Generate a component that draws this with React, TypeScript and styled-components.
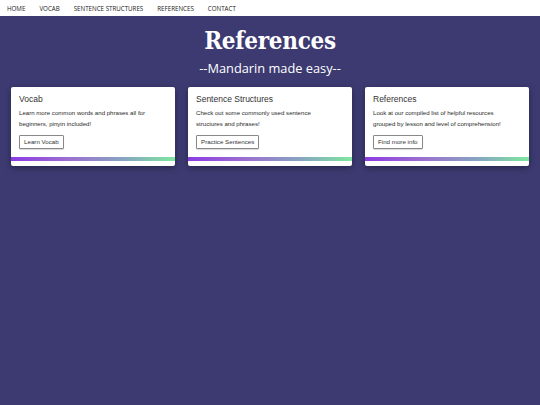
import React from 'react';
import styled, { createGlobalStyle } from 'styled-components';

const GlobalStyle = createGlobalStyle`
    html, body {
        margin: 0;
        padding: 0;
        background: #3c3a71;
        min-height: 100%;
    }
    body {
        font-family: 'Liberation Sans', Arial, sans-serif;
    }
`;

const Page = styled.div`
    min-height: 405px;
    background: #3c3a71;
`;

const Nav = styled.nav`
    height: 16px;
    background: #ffffff;
    display: flex;
    align-items: center;
    padding-left: 7px;
    gap: 14px;
`;

const NavLink = styled.a`
    font-family: 'Open Sans', sans-serif;
    font-size: 6.2px;
    color: #222;
    text-decoration: none;
`;

const Header = styled.header`
    display: flex;
    flex-direction: column;
    align-items: center;
    padding-top: 7px;
`;

const Title = styled.h1`
    margin: 0;
    font-family: 'DejaVu Serif Condensed', 'DejaVu Serif', serif;
    font-weight: 700;
    font-size: 24px;
    line-height: 36px;
    color: #ffffff;
    letter-spacing: -0.3px;
`;

const Subtitle = styled.p`
    margin: 0;
    font-family: 'Open Sans', sans-serif;
    font-size: 12.8px;
    line-height: 18px;
    color: #ffffff;
`;

const CardRow = styled.section`
    display: grid;
    grid-template-columns: repeat(3, 164px);
    justify-content: space-between;
    padding: 10px 11px 0;
`;

const Card = styled.div`
    background: #ffffff;
    border-radius: 2px;
    box-shadow: 0 2px 6px rgba(0, 0, 0, 0.35);
    display: flex;
    flex-direction: column;
    padding-bottom: 5px;
`;

const CardBody = styled.div`
    padding: 6px 8px 8px;
`;

const CardTitle = styled.h3`
    margin: 0 0 2px;
    font-weight: 400;
    font-size: 8.5px;
    line-height: 12px;
    color: #333;
`;

const CardText = styled.p`
    margin: 0 0 6px;
    font-size: 6.1px;
    line-height: 11px;
    color: #2a2a2a;
`;

const Button = styled.button`
    display: block;
    font-family: 'Liberation Sans', Arial, sans-serif;
    font-size: 6.2px;
    color: #333;
    background: #fff;
    border: 1px solid #888;
    border-radius: 1px;
    padding: 0 4px;
    height: 14px;
    line-height: 12px;
    box-shadow: 0 1px 1px rgba(0, 0, 0, 0.15);
`;

const GradientBar = styled.div`
    height: 4px;
    background: linear-gradient(90deg, #8b3be3 0%, #9c6fd0 35%, #86a7c0 70%, #7ee89e 100%);
`;

const links = ['HOME', 'VOCAB', 'SENTENCE STRUCTURES', 'REFERENCES', 'CONTACT'];

const cards = [
    {
        title: 'Vocab',
        lines: ['Learn more common words and phrases all for', 'beginners, pinyin included!'],
        button: 'Learn Vocab',
    },
    {
        title: 'Sentence Structures',
        lines: ['Check out some commonly used sentence', 'structures and phrases!'],
        button: 'Practice Sentences',
    },
    {
        title: 'References',
        lines: ['Look at our compiled list of helpful resources', 'grouped by lesson and level of comprehension!'],
        button: 'Find more info',
    },
];

export default function App() {
    return (
        <Page>
            <GlobalStyle />
            <Nav>
                {links.map((l) => (
                    <NavLink key={l} href="#">{l}</NavLink>
                ))}
            </Nav>
            <Header>
                <Title>References</Title>
                <Subtitle>--Mandarin made easy--</Subtitle>
            </Header>
            <CardRow>
                {cards.map((c) => (
                    <Card key={c.title}>
                        <CardBody>
                            <CardTitle>{c.title}</CardTitle>
                            <CardText>
                                {c.lines[0]}
                                <br />
                                {c.lines[1]}
                            </CardText>
                            <Button>{c.button}</Button>
                        </CardBody>
                        <GradientBar />
                    </Card>
                ))}
            </CardRow>
        </Page>
    );
}
